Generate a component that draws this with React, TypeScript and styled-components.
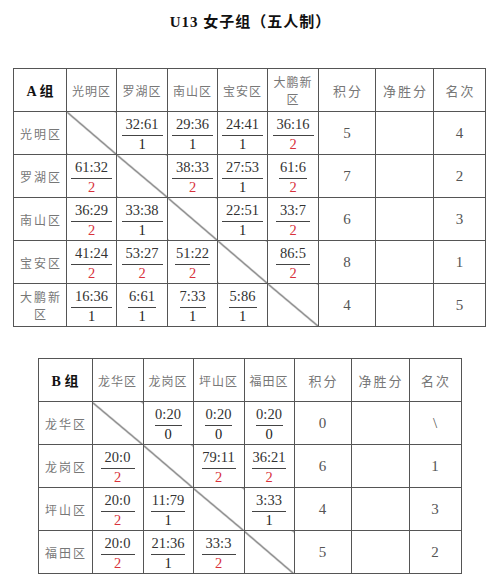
import React from "react";
import styled, { createGlobalStyle } from "styled-components";

const Global = createGlobalStyle`
  html, body { margin: 0; padding: 0; background: #fff; }
  body { font-family: "Liberation Serif", "Noto Sans CJK SC", serif; }
`;

const Page = styled.div`
  width: 499px;
  display: flex;
  flex-direction: column;
  align-items: center;
  padding-top: 12px;
`;

const Title = styled.h1`
  margin: 0 0 36px 0;
  height: 20px;
  line-height: 20px;
  font-size: 15px;
  font-weight: 700;
  color: #111;
  letter-spacing: 1px;
  font-family: "Liberation Serif", "Noto Sans CJK SC", serif;
  padding-left: 2px;
`;

const Table = styled.table<{ $mt?: number }>`
  border-collapse: collapse;
  table-layout: fixed;
  margin-top: ${(p) => p.$mt ?? 0}px;
  border: 1px solid #555;
`;

const Row = styled.tr`
  height: 43px;
`;

const Cell = styled.td`
  border: 1px solid #555;
  padding: 0;
  text-align: center;
  vertical-align: middle;
  height: 42px;
  box-sizing: border-box;
`;

const GroupCell = styled(Cell)`
  font-family: "Liberation Serif", "Noto Sans CJK SC", serif;
  font-weight: 700;
  font-size: 14px;
  color: #111;
`;

const HeadCell = styled(Cell)`
  font-family: "Noto Sans CJK SC", sans-serif;
  font-size: 12px;
  line-height: 17px;
  color: #777;
  letter-spacing: 1px;
`;

const StatHead = styled(HeadCell)`
  font-size: 13px;
  letter-spacing: 2px;
  padding-left: 2px;
`;

const LabelCell = styled(HeadCell)`
  letter-spacing: 2px;
  padding-left: 2px;
`;

const ScoreCell = styled(Cell)<{ $diag?: boolean }>`
  background: ${(p) =>
    p.$diag
      ? "linear-gradient(to top right, transparent calc(50% - 0.9px), #4a4a4a calc(50% - 0.15px), #4a4a4a calc(50% + 0.15px), transparent calc(50% + 0.9px))"
      : "transparent"};
`;

const NumCell = styled(Cell)`
  font-family: "Liberation Serif", serif;
  font-size: 15px;
  color: #555;
`;

const Frac = styled.div`
  display: inline-flex;
  flex-direction: column;
  align-items: center;
  font-family: "Liberation Serif", serif;
  font-size: 14.5px;
  padding-top: 1px;
`;

const Top = styled.span<{ $w: number }>`
  display: block;
  width: ${(p) => p.$w}px;
  line-height: 15px;
  padding-bottom: 3px;
  border-bottom: 1px solid #444;
  color: #333;
`;

const Bottom = styled.span<{ $red?: boolean }>`
  display: block;
  line-height: 15px;
  padding-top: 1px;
  color: ${(p) => (p.$red ? "#d8323c" : "#222")};
`;

type Score = { s: string; r: string; w?: number } | null;
type TeamRow = { name: React.ReactNode; scores: Score[]; pts: string; rank: string };

const sc = (s: string, r: string, w?: number): Score => ({ s, r, w });

const dapeng = (
  <>
    大鹏新
    <br />
    区
  </>
);

const groupA: { names: React.ReactNode[]; rows: TeamRow[]; widths: number[]; defW: number } = {
  names: ["光明区", "罗湖区", "南山区", "宝安区", dapeng],
  widths: [53, 50, 51, 50, 50, 51, 57, 58, 52],
  defW: 41,
  rows: [
    { name: "光明区", scores: [null, sc("32:61", "1"), sc("29:36", "1"), sc("24:41", "1"), sc("36:16", "2")], pts: "5", rank: "4" },
    { name: "罗湖区", scores: [sc("61:32", "2"), null, sc("38:33", "2"), sc("27:53", "1"), sc("61:6", "2", 28)], pts: "7", rank: "2" },
    { name: "南山区", scores: [sc("36:29", "2"), sc("33:38", "1"), null, sc("22:51", "1"), sc("33:7", "2", 34)], pts: "6", rank: "3" },
    { name: "宝安区", scores: [sc("41:24", "2"), sc("53:27", "2"), sc("51:22", "2", 35), null, sc("86:5", "2", 34)], pts: "8", rank: "1" },
    { name: dapeng, scores: [sc("16:36", "1"), sc("6:61", "1", 28), sc("7:33", "1", 26), sc("5:86", "1", 28), null], pts: "4", rank: "5" },
  ],
};

const groupB: typeof groupA = {
  names: ["龙华区", "龙岗区", "坪山区", "福田区"],
  widths: [54, 51, 50, 51, 50, 57, 58, 52],
  defW: 34,
  rows: [
    { name: "龙华区", scores: [null, sc("0:20", "0", 27), sc("0:20", "0", 27), sc("0:20", "0", 27)], pts: "0", rank: "\\" },
    { name: "龙岗区", scores: [sc("20:0", "2"), null, sc("79:11", "2"), sc("36:21", "2")], pts: "6", rank: "1" },
    { name: "坪山区", scores: [sc("20:0", "2"), sc("11:79", "1"), null, sc("3:33", "1")], pts: "4", rank: "3" },
    { name: "福田区", scores: [sc("20:0", "2"), sc("21:36", "1"), sc("33:3", "2"), null], pts: "5", rank: "2" },
  ],
};

function GroupTable({ label, g, mt }: { label: string; g: typeof groupA; mt?: number }) {
  return (
    <Table $mt={mt}>
      <colgroup>
        {g.widths.map((w, i) => (
          <col key={i} style={{ width: w }} />
        ))}
      </colgroup>
      <tbody>
        <Row>
          <GroupCell>{label}</GroupCell>
          {g.names.map((n, i) => (
            <HeadCell key={i}>{n}</HeadCell>
          ))}
          <StatHead>积分</StatHead>
          <StatHead>净胜分</StatHead>
          <StatHead>名次</StatHead>
        </Row>
        {g.rows.map((r, ri) => (
          <Row key={ri}>
            <LabelCell>{r.name}</LabelCell>
            {r.scores.map((s, si) =>
              s ? (
                <ScoreCell key={si}>
                  <Frac>
                    <Top $w={s.w ?? g.defW}>{s.s}</Top>
                    <Bottom $red={s.r === "2"}>{s.r}</Bottom>
                  </Frac>
                </ScoreCell>
              ) : (
                <ScoreCell key={si} $diag />
              )
            )}
            <NumCell>{r.pts}</NumCell>
            <NumCell />
            <NumCell>{r.rank}</NumCell>
          </Row>
        ))}
      </tbody>
    </Table>
  );
}

export default function App() {
  return (
    <>
      <Global />
      <Page>
        <Title>U13 女子组（五人制）</Title>
        <GroupTable label="A 组" g={groupA} />
        <GroupTable label="B 组" g={groupB} mt={31} />
      </Page>
    </>
  );
}
